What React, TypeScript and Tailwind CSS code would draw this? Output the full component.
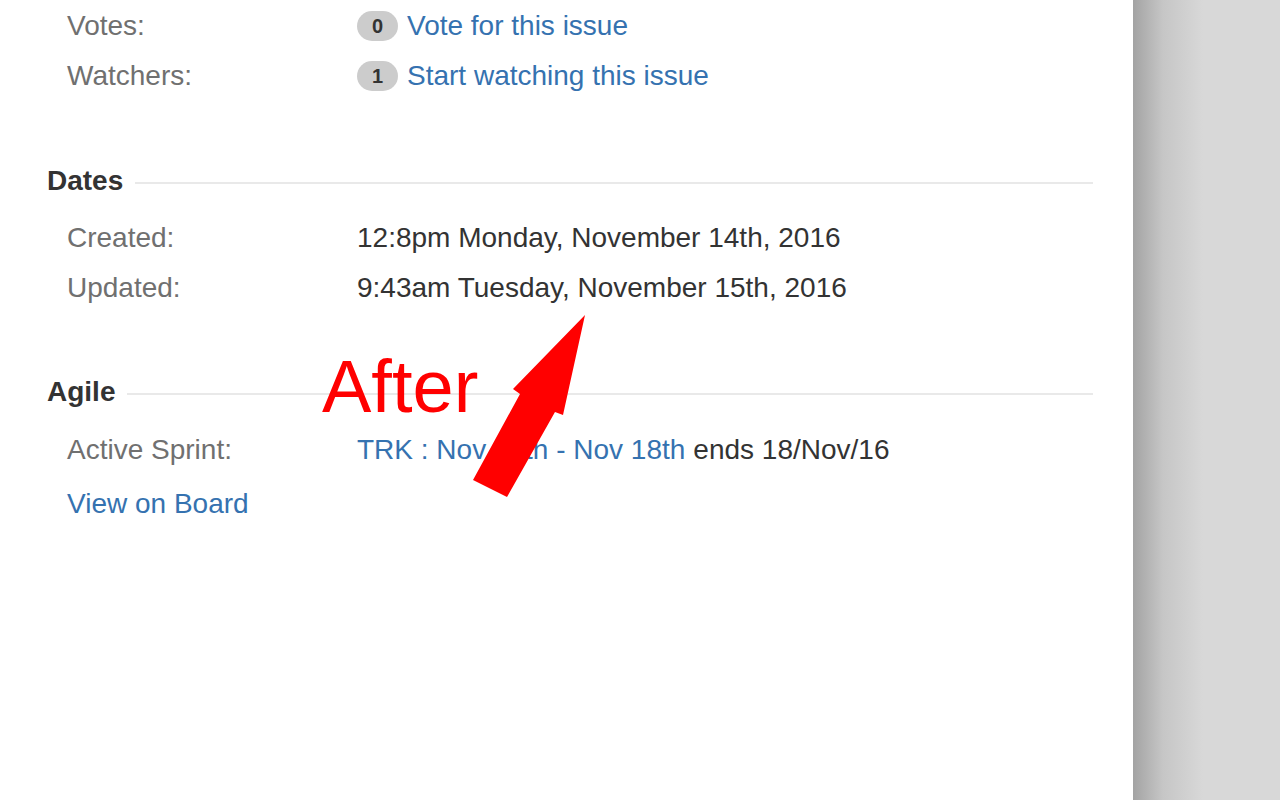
import React from 'react';

const font = { fontFamily: '"Liberation Sans", Arial, Helvetica, sans-serif' };

function Row({ label, children, className = '' }: { label: string; children: React.ReactNode; className?: string }) {
  return (
    <div className={`flex h-[50px] items-center ${className}`}>
      <div className="w-[310px] pl-[20px] text-[#707070]">{label}</div>
      <div className="flex items-center text-[#333333]">{children}</div>
    </div>
  );
}

function Heading({ title, className = '' }: { title: string; className?: string }) {
  return (
    <div className={`flex h-[40px] items-center gap-[12px] pr-[40px] ${className}`}>
      <h2 className="font-bold text-[#333333]">{title}</h2>
      <div className="mt-[3px] h-[2px] flex-1 bg-[#e9e9e9]" />
    </div>
  );
}

function Badge({ n }: { n: number }) {
  return (
    <span className="mr-[9px] flex h-[30px] w-[41px] items-center justify-center rounded-full bg-[#cccccc] text-[20px] font-bold text-[#333333]">
      {n}
    </span>
  );
}

export default function App() {
  return (
    <div className="flex h-[800px] w-[1280px] overflow-hidden bg-white text-[28px]" style={font}>
      <div className="relative w-[1133px] pl-[47px] pt-[1px]">
        <Row label="Votes:">
          <Badge n={0} />
          <a className="text-[#3572b0]">Vote for this issue</a>
        </Row>
        <Row label="Watchers:">
          <Badge n={1} />
          <a className="text-[#3572b0]">Start watching this issue</a>
        </Row>

        <Heading title="Dates" className="mt-[60px]" />
        <Row label="Created:" className="mt-[12px]">12:8pm Monday, November 14th, 2016</Row>
        <Row label="Updated:">9:43am Tuesday, November 15th, 2016</Row>

        <Heading title="Agile" className="mt-[59px]" />
        <Row label="Active Sprint:" className="mt-[13px]">
          <a className="text-[#3572b0]">TRK : Nov 14th - Nov 18th</a>
          <span className="ml-[8px]">ends 18/Nov/16</span>
        </Row>
        <div className="mt-[4px] flex h-[50px] items-center pl-[20px]">
          <a className="text-[#3572b0]">View on Board</a>
        </div>

        {/* annotation overlay */}
        <div className="absolute left-[322px] top-[350px] text-[74px] leading-none text-[#ff0000]">After</div>
        <svg className="absolute left-0 top-0" width="1133" height="800" viewBox="0 0 1133 800">
          <polygon
            points="585,315 563,415 555,412 507,497 473,480 520,394 513,389"
            fill="#ff0000"
          />
        </svg>
      </div>
      <div className="flex-1 bg-[linear-gradient(to_right,#a3a3a3,#c6c6c6_30px,#d8d8d8_70px)]" />
    </div>
  );
}
